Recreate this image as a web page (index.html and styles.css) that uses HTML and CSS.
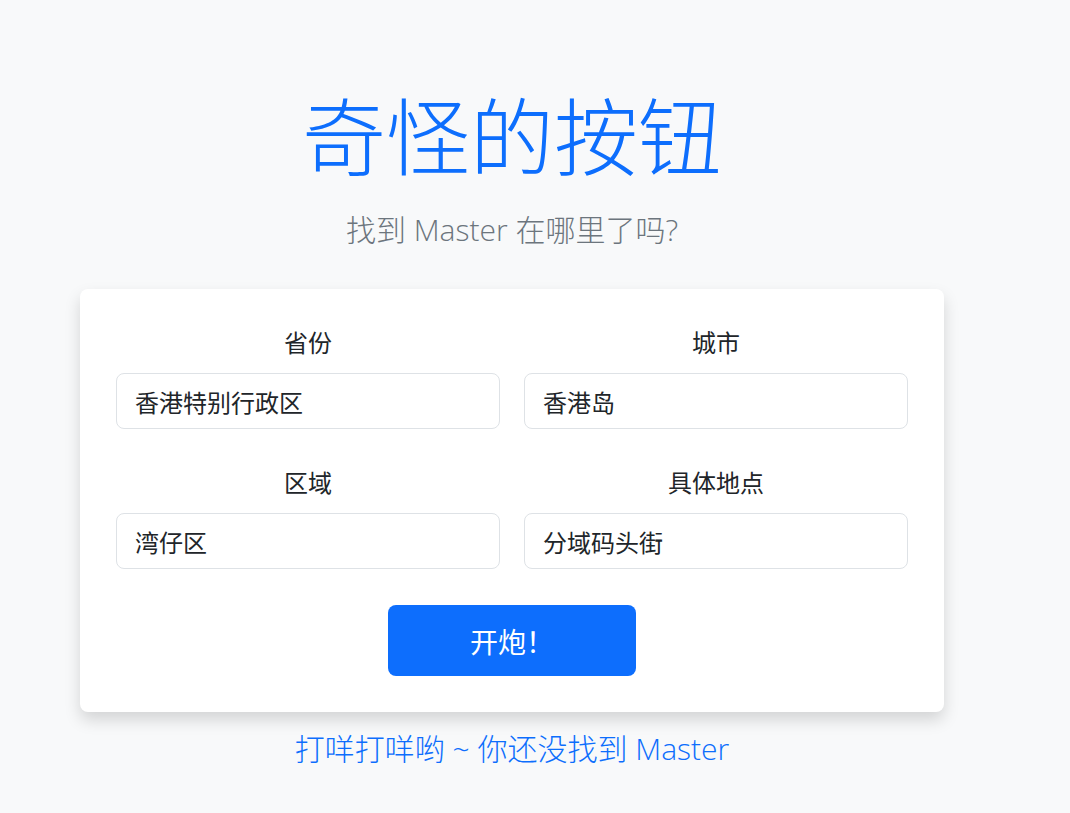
FILE: index.html
```html
<!DOCTYPE html>
<html lang="zh-CN">
<head>
<meta charset="utf-8">
<title>奇怪的按钮</title>
<link rel="stylesheet" href="styles.css">
</head>
<body>
<main class="page">
  <h1 class="title">奇怪的按钮</h1>
  <p class="subtitle">找到 Master 在哪里了吗?</p>
  <form class="card">
    <div class="grid">
      <div class="field">
        <label class="label">省份</label>
        <input class="input" type="text" value="香港特别行政区">
      </div>
      <div class="field">
        <label class="label">城市</label>
        <input class="input" type="text" value="香港岛">
      </div>
      <div class="field">
        <label class="label">区域</label>
        <input class="input" type="text" value="湾仔区">
      </div>
      <div class="field">
        <label class="label">具体地点</label>
        <input class="input" type="text" value="分域码头街">
      </div>
    </div>
    <div class="actions">
      <button class="btn" type="button">开炮！</button>
    </div>
  </form>
  <p class="footer">打咩打咩哟 ~ 你还没找到 Master</p>
</main>
</body>
</html>
```

FILE: styles.css
```css
html, body {
  margin: 0;
  padding: 0;
  background: #f8f9fa;
}
body {
  font-family: "Noto Sans CJK SC", "Noto Sans", sans-serif;
  color: #212529;
}
.page {
  width: 1024px;
  display: flex;
  flex-direction: column;
  align-items: center;
  padding-top: 83px;
}
.title {
  margin: 0;
  font-size: 84px;
  line-height: 100px;
  font-weight: 300;
  color: #0d6efd;
}
.subtitle {
  margin: 27px 0 0;
  font-family: "Open Sans", "Noto Sans CJK SC", sans-serif;
  font-size: 30px;
  line-height: 40px;
  font-weight: 300;
  color: #6c757d;
}
.card {
  margin-top: 39px;
  width: 864px;
  box-sizing: border-box;
  padding: 36px;
  background: #fff;
  border-radius: 8px;
  box-shadow: 0 8px 16px rgba(0, 0, 0, 0.15);
}
.grid {
  display: grid;
  grid-template-columns: 1fr 1fr;
  column-gap: 24px;
  row-gap: 36px;
}
.field {
  display: flex;
  flex-direction: column;
}
.label {
  font-size: 24px;
  line-height: 34px;
  text-align: center;
  margin-bottom: 14px;
}
.input {
  height: 56px;
  box-sizing: border-box;
  border: 1px solid #dee2e6;
  border-radius: 8px;
  padding: 0 18px;
  font-family: "Noto Sans CJK SC", "Noto Sans", sans-serif;
  font-size: 24px;
  color: #212529;
  background: #fff;
  outline: none;
}
.actions {
  display: flex;
  justify-content: center;
  margin-top: 36px;
}
.btn {
  width: 248px;
  height: 71px;
  border: none;
  border-radius: 8px;
  background: #0d6efd;
  color: #fff;
  font-family: "Noto Sans CJK SC", "Noto Sans", sans-serif;
  font-size: 28px;
  cursor: pointer;
}
.footer {
  margin: 17px 0 0;
  font-family: "Open Sans", "Noto Sans CJK SC", sans-serif;
  font-size: 30px;
  line-height: 40px;
  font-weight: 300;
  color: #0d6efd;
}
```
